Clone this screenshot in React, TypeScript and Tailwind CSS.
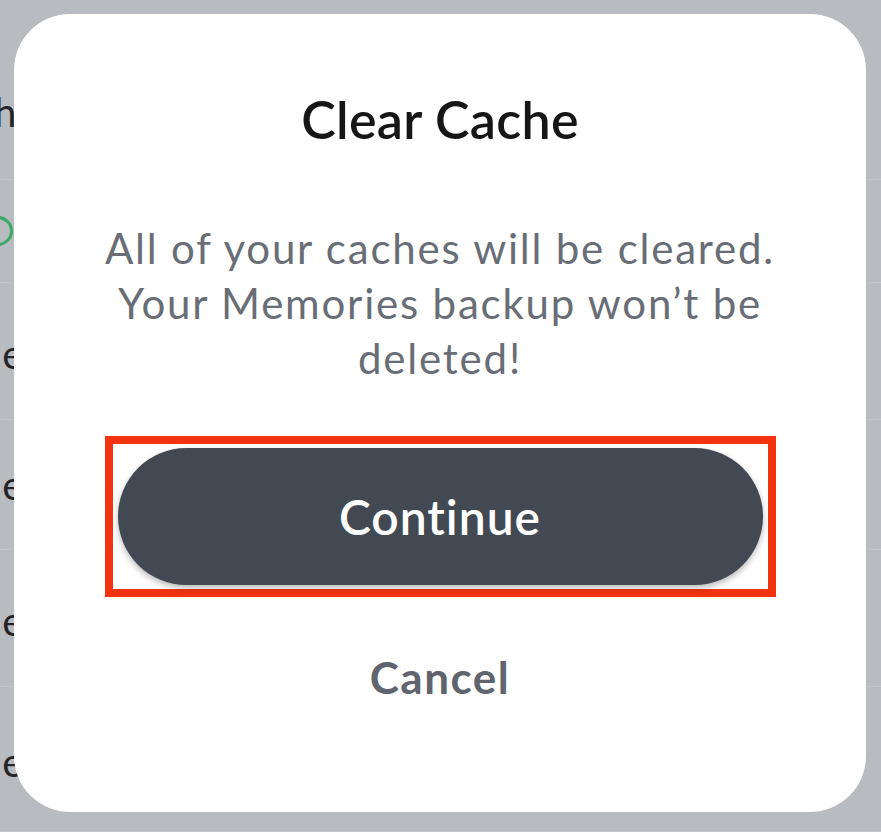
import React from 'react'

const rows = [
  { h: 180, text: 'h', ml: -6, kind: 'text', pt: 44 },
  { h: 103, text: '', ml: 0, kind: 'check', pt: 0 },
  { h: 137, text: 'Clear', ml: -34, kind: 'text', pt: 6 },
  { h: 130, text: 'Clear', ml: -34, kind: 'text', pt: 0 },
  { h: 137, text: 'Clear', ml: -34, kind: 'text', pt: 6 },
  { h: 145, text: 'Clear', ml: -34, kind: 'text', pt: 6 },
]

export default function App() {
  return (
    <div className="relative w-[881px] h-[832px] overflow-hidden bg-[#b8bbc0] font-['Lato','Noto_Sans',sans-serif]">
      {/* settings list dimmed behind the sheet */}
      <div className="flex flex-col">
        {rows.map((r, i) => (
          <div
            key={i}
            style={{ height: r.h, paddingTop: r.pt }}
            className="flex items-center border-b border-[#c3c6ca] text-[40px] leading-none text-[#222428]"
          >
            {r.kind === 'check' ? (
              <span className="ml-[-17px] w-[30px] h-[30px] rounded-full border-[3px] border-[#3aa866]" />
            ) : (
              <span style={{ marginLeft: r.ml }}>{r.text}</span>
            )}
          </div>
        ))}
      </div>

      {/* alert sheet */}
      <div className="absolute left-[14px] top-[14px] w-[852px] h-[798px] rounded-[56px] bg-white flex flex-col items-center pt-[74px]">
        <h2 className="text-[52px] leading-[62px] font-semibold text-[#161616] tracking-[0.3px]">Clear Cache</h2>

        <p className="mt-[71px] text-[42px] leading-[55px] text-center text-[#686d76] tracking-[1.8px]">
          All of your caches will be cleared.
          <br />
          Your Memories backup won’t be
          <br />
          deleted!
        </p>

        <div className="mt-[50px] w-[671px] h-[161px] border-[8px] border-[#f2330f] px-[5px] py-[4px]">
          <button
            type="button"
            className="w-full h-full rounded-full bg-[#434952] shadow-[0_3px_6px_rgba(0,0,0,0.28)] text-white text-[48px] font-semibold tracking-[1px] flex items-center justify-center"
          >
            Continue
          </button>
        </div>

        <button type="button" className="mt-[54px] text-[44px] leading-[53px] font-bold tracking-[1.5px] text-[#60646d]">
          Cancel
        </button>
      </div>
    </div>
  )
}
